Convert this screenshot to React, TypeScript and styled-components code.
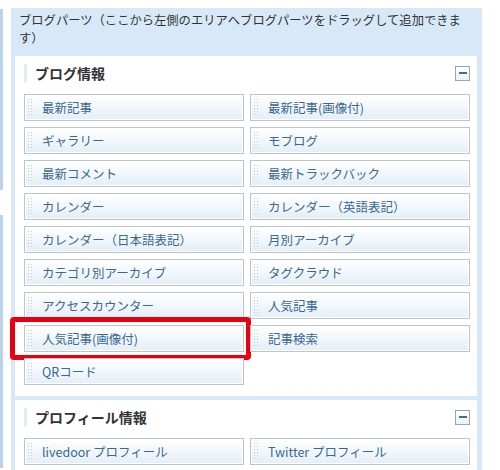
import styled, { createGlobalStyle } from "styled-components";

const GlobalStyle = createGlobalStyle`
  body {
    margin: 0;
    background: #fff;
    font-family: "Noto Sans CJK JP", "Noto Sans", sans-serif;
  }
`

const Page = styled.div`
  display: flex;
  gap: 8px;
  width: 500px;
  height: 470px;
  overflow: hidden;
`

const StripColumn = styled.div`
  display: flex;
  flex-direction: column;
  gap: 25px;
  width: 3px;
  padding-top: 9px;
`

const StripSegment = styled.div<{ $h: number }>`
  height: ${(p) => p.$h}px;
  background: #b9d3ea;
`

const Panel = styled.div`
  margin-top: 8px;
  width: 471px;
  background: #d7e9f8;
  padding: 0 5px 0 4px;
  box-sizing: border-box;
`

const PanelHeader = styled.div`
  padding: 3px 10px 9px 4px;
  font-size: 12.3px;
  line-height: 18px;
  color: #333;
`

const Section = styled.div`
  background: #fff;
  padding: 8px 7px 11px 9px;
  margin-bottom: 4px;
`

const TitleRow = styled.div`
  display: flex;
  align-items: center;
  justify-content: space-between;
  height: 18px;
  margin-bottom: 12px;
`

const Title = styled.h3`
  margin: 0;
  padding-left: 8px;
  border-left: 3px solid #e4ecf2;
  font-size: 14px;
  font-weight: 700;
  line-height: 18px;
  color: #333;
`

const MinusButton = styled.button`
  display: flex;
  align-items: center;
  justify-content: center;
  width: 15px;
  height: 15px;
  padding: 0;
  border: 1px solid #9aa6ad;
  background: linear-gradient(to bottom, #ffffff, #e8f1f8);
  cursor: pointer;

  &::before {
    content: "";
    width: 8px;
    height: 2px;
    background: #4a6a7e;
  }
`

const PartsGrid = styled.div`
  display: grid;
  grid-template-columns: 220px 220px;
  column-gap: 6px;
  row-gap: 6px;
`

const PartButton = styled.div<{ $highlight?: boolean }>`
  position: relative;
  display: flex;
  align-items: center;
  height: 27px;
  box-sizing: border-box;
  border: 1px solid #bcc5ca;
  background: linear-gradient(to bottom, #ffffff 0%, #f3f8fc 45%, #e3eef7 100%);
  box-shadow: inset 0 0 0 1px #ffffff;
  font-size: 12.5px;
  color: #3a6892;
  cursor: move;

  &::after {
    content: "";
    display: ${(p) => (p.$highlight ? "block" : "none")};
    position: absolute;
    left: -15px;
    right: -8px;
    top: -9px;
    bottom: -9px;
    border: 5px solid #e60012;
    border-radius: 4px;
    pointer-events: none;
  }
`

const Grip = styled.span`
  width: 6px;
  height: 19px;
  margin: 0 9px 0 2px;
  background-image: radial-gradient(circle, #c3ccd3 0.8px, transparent 1px);
  background-size: 3px 3px;
`

const blogParts = [
  "最新記事",
  "最新記事(画像付)",
  "ギャラリー",
  "モブログ",
  "最新コメント",
  "最新トラックバック",
  "カレンダー",
  "カレンダー（英語表記）",
  "カレンダー（日本語表記）",
  "月別アーカイブ",
  "カテゴリ別アーカイブ",
  "タグクラウド",
  "アクセスカウンター",
  "人気記事",
  "人気記事(画像付)",
  "記事検索",
  "QRコード",
]

const profileParts = ["livedoor プロフィール", "Twitter プロフィール"]

export default function App() {
  return (
    <>
      <GlobalStyle />
      <Page>
        <StripColumn>
          <StripSegment $h={181} />
          <StripSegment $h={253} />
        </StripColumn>
        <Panel>
          <PanelHeader>ブログパーツ（ここから左側のエリアへブログパーツをドラッグして追加できます）</PanelHeader>

          <Section>
            <TitleRow>
              <Title>ブログ情報</Title>
              <MinusButton aria-label="閉じる" />
            </TitleRow>
            <PartsGrid>
              {blogParts.map((name) => (
                <PartButton key={name} $highlight={name === "人気記事(画像付)"}>
                  <Grip />
                  {name}
                </PartButton>
              ))}
            </PartsGrid>
          </Section>

          <Section>
            <TitleRow>
              <Title>プロフィール情報</Title>
              <MinusButton aria-label="閉じる" />
            </TitleRow>
            <PartsGrid>
              {profileParts.map((name) => (
                <PartButton key={name}>
                  <Grip />
                  {name}
                </PartButton>
              ))}
            </PartsGrid>
          </Section>
        </Panel>
      </Page>
    </>
  )
}
